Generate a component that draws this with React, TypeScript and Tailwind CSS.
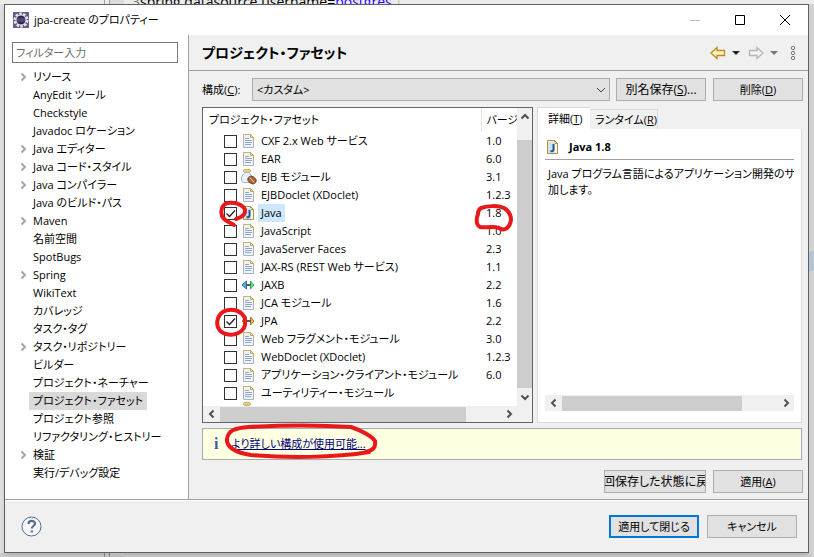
import { ReactNode } from 'react'

const PAGES = [
  { name: 'リソース', open: true },
  { name: 'AnyEdit ツール' },
  { name: 'Checkstyle' },
  { name: 'Javadoc ロケーション' },
  { name: 'Java エディター', open: true },
  { name: 'Java コード・スタイル', open: true },
  { name: 'Java コンパイラー', open: true },
  { name: 'Java のビルド・パス' },
  { name: 'Maven', open: true },
  { name: '名前空間' },
  { name: 'SpotBugs' },
  { name: 'Spring', open: true },
  { name: 'WikiText' },
  { name: 'カバレッジ' },
  { name: 'タスク・タグ' },
  { name: 'タスク・リポジトリー', open: true },
  { name: 'ビルダー' },
  { name: 'プロジェクト・ネーチャー' },
  { name: 'プロジェクト・ファセット', selected: true },
  { name: 'プロジェクト参照' },
  { name: 'リファクタリング・ヒストリー' },
  { name: '検証', open: true },
  { name: '実行/デバッグ設定' },
]

const FACETS = [
  { name: 'CXF 2.x Web サービス', version: '1.0', icon: 'doc' },
  { name: 'EAR', version: '6.0', icon: 'doc' },
  { name: 'EJB モジュール', version: '3.1', icon: 'ejb' },
  { name: 'EJBDoclet (XDoclet)', version: '1.2.3', icon: 'doc' },
  { name: 'Java', version: '1.8', icon: 'java', checked: true, selected: true },
  { name: 'JavaScript', version: '1.0', icon: 'doc' },
  { name: 'JavaServer Faces', version: '2.3', icon: 'doc' },
  { name: 'JAX-RS (REST Web サービス)', version: '1.1', icon: 'doc' },
  { name: 'JAXB', version: '2.2', icon: 'jaxb' },
  { name: 'JCA モジュール', version: '1.6', icon: 'doc' },
  { name: 'JPA', version: '2.2', icon: 'jpa', checked: true },
  { name: 'Web フラグメント・モジュール', version: '3.0', icon: 'doc' },
  { name: 'WebDoclet (XDoclet)', version: '1.2.3', icon: 'doc' },
  { name: 'アプリケーション・クライアント・モジュール', version: '6.0', icon: 'doc' },
  { name: 'ユーティリティー・モジュール', version: '', icon: 'doc' },
]

function FacetIcon({ kind }: { kind: string }) {
  if (kind === 'ejb') {
    return (
      <svg width="16" height="16" viewBox="0 0 16 16">
        <rect x="2.5" y="0.5" width="7" height="2.5" rx="1" fill="#f7d774" stroke="#c09a4c" strokeWidth="0.8" />
        <path
          d="M3.500 3.500h5c0 2 3 2.500 3 5.500v2c0 1.500-1 2.500-2.500 2.500h-6C1.500 13.500.5 12.500.5 11V9c0-3 3-3.500 3-5.500z"
          fill="#eaf3fc"
          stroke="#a3b6d0"
        />
        <ellipse cx="11" cy="11" rx="4.500" ry="3.500" transform="rotate(35 11 11)" fill="#a8683e" stroke="#6b3a1c" strokeWidth="0.8" />
        <path d="M8.500 8.500c2 .5 2 3.500 5 5" fill="none" stroke="#f0cfae" />
      </svg>
    )
  }
  if (kind === 'jaxb' || kind === 'jpa') {
    const left = kind === 'jaxb' ? '#5aaae6' : '#f5c56a'
    const right = kind === 'jaxb' ? '#6fe08a' : '#f5b04a'
    const edge = kind === 'jaxb' ? '#2fae50' : '#b0701c'
    return (
      <svg width="16" height="16" viewBox="0 0 16 16">
        <path d="M5.500 4v8L1 8z" fill={left} stroke={kind === 'jaxb' ? '#2b6fb0' : edge} />
        <path d="M9.500 4v8L13 8z" fill={right} stroke={edge} />
        <path d="M5 8h5" stroke="#5a5a5a" strokeWidth="2" />
      </svg>
    )
  }
  if (kind === 'java') {
    return (
      <svg width="16" height="16" viewBox="0 0 16 16">
        <path d="M2.500 1.500h7l3 3v10h-10z" fill="#fdf8e4" stroke="#b08f45" />
        <path d="M9.500 1.500v3h3z" fill="#e8cf8c" stroke="#b08f45" />
        <rect x="3" y="3" width="7" height="11" fill="#cfe3f6" />
        <path d="M8.500 5v5.500c0 1.500-1 2-3 1.500" fill="none" stroke="#1d5a96" strokeWidth="2" />
      </svg>
    )
  }
  return (
    <svg width="16" height="16" viewBox="0 0 16 16">
      <path d="M2.500 1.500h7l3 3v10h-10z" fill="#eef3fb" stroke="#a9b3c4" />
      <path d="M2.500 6V1.500h7l3 3V8" fill="none" stroke="#c4b27a" />
      <path d="M9.500 1.500v3h3z" fill="#ecd794" stroke="#c4a860" />
      <path d="M4 5.500h4M4 7.500h7M4 9.500h7M4 11.500h6" stroke="#90a5cc" />
    </svg>
  )
}

function Chevron({ dir, className = '' }: { dir: 'left' | 'right' | 'up' | 'down'; className?: string }) {
  const paths = {
    left: 'M6.500 1.500L3 5l3.500 3.500',
    right: 'M3.500 1.500L7 5 3.500 8.500',
    up: 'M1.500 6.500L5 3l3.500 3.500',
    down: 'M1.500 3.500L5 7l3.500-3.500',
  }
  return (
    <svg width="10" height="10" viewBox="0 0 10 10" className={className}>
      <path d={paths[dir]} fill="none" stroke="currentColor" strokeWidth="2" />
    </svg>
  )
}

function PushButton({ children, className = '' }: { children: ReactNode; className?: string }) {
  return (
    <button
      className={`flex h-[23px] shrink-0 items-center justify-center overflow-hidden whitespace-nowrap bg-[#e1e1e1] ${className}`}
    >
      <span>{children}</span>
    </button>
  )
}

function HScroll({ thumb }: { thumb: string }) {
  return (
    <div className="flex h-4 items-center bg-[#f0f0f0] text-[#505050]">
      <div className="flex w-[17px] justify-center">
        <Chevron dir="left" />
      </div>
      <div className="flex h-[15px] flex-1">
        <div className={`bg-[#cdcdcd] ${thumb}`} />
      </div>
      <div className="flex w-[17px] justify-center">
        <Chevron dir="right" />
      </div>
    </div>
  )
}

function TitleBar() {
  return (
    <header className="flex h-[30px] items-center bg-white pl-2">
      <svg width="16" height="16" viewBox="0 0 16 16">
        <rect width="16" height="16" fill="#6b5a8c" />
        <circle cx="8" cy="8" r="6" fill="none" stroke="#e8e4ee" strokeWidth="3" strokeDasharray="2.400 1.300" />
        <circle cx="8" cy="8" r="5" fill="#2f2a4c" stroke="#e8e4ee" />
        <path d="M4 7h8M4 9h8" stroke="#6a6690" />
      </svg>
      <h1 className="ml-[5px] flex-1">jpa-create のプロパティー</h1>
      <button aria-label="最小化" className="flex w-[45px] justify-center">
        <svg width="10" height="10" viewBox="0 0 10 10">
          <path d="M0 5.500h10" stroke="#bdbdbd" />
        </svg>
      </button>
      <button aria-label="最大化" className="flex w-[45px] justify-center">
        <svg width="10" height="10" viewBox="0 0 10 10">
          <path d="M.5.5h9v9h-9z" fill="none" stroke="#000" />
        </svg>
      </button>
      <button aria-label="閉じる" className="flex w-[46px] justify-center">
        <svg width="10" height="10" viewBox="0 0 10 10">
          <path d="M0 0l10 10M10 0L0 10" stroke="#000" />
        </svg>
      </button>
    </header>
  )
}

function Sidebar() {
  return (
    <nav className="w-[184px] shrink-0 border-r border-[#a0a0a0] bg-white pt-[7px] pl-[7px]">
      <input
        aria-label="フィルター入力"
        placeholder="フィルター入力"
        className="block h-[21px] w-[166px] border border-[#7a7a7a] px-[3px] placeholder:text-[#6d6d6d]"
      />
      <ul className="mt-[5px]">
        {PAGES.map((page) => (
          <li key={page.name} className="flex h-[18px] items-center">
            <span className="flex w-[17px] justify-center pl-1 text-[#a6a6a6]">
              {page.open && <Chevron dir="right" />}
            </span>
            <a
              href="#"
              className={`flex h-[18px] items-center whitespace-nowrap px-1 ${page.selected ? 'bg-[#d9d9d9]' : ''}`}
            >
              {page.name}
            </a>
          </li>
        ))}
      </ul>
    </nav>
  )
}

function PageHeader() {
  return (
    <div className="flex h-9 items-center border-b border-[#a0a0a0] pr-3 pl-[13px]">
      <h2 className="flex-1 text-sm font-bold">プロジェクト・ファセット</h2>
      <div className="flex items-center">
        <button aria-label="戻る">
          <svg width="16" height="14" viewBox="0 0 16 14">
            <path d="M1 7l6-5.500v3h7.500v5H7v3z" fill="#fdf3c4" stroke="#c08a1c" strokeWidth="1.300" />
          </svg>
        </button>
        <svg width="8" height="4" viewBox="0 0 8 4" className="ml-[6px]">
          <path d="M0 0h8L4 4z" fill="#222" />
        </svg>
        <button aria-label="進む" className="ml-2">
          <svg width="16" height="14" viewBox="0 0 16 14">
            <path d="M15 7L9 1.500v3H1.500v5H9v3z" fill="#f4f4f4" stroke="#b4b4b4" strokeWidth="1.300" />
          </svg>
        </button>
        <svg width="8" height="4" viewBox="0 0 8 4" className="ml-[6px]">
          <path d="M0 0h8L4 4z" fill="#777" />
        </svg>
        <button aria-label="メニュー" className="ml-3">
          <svg width="6" height="16" viewBox="0 0 6 16" fill="none" stroke="#777">
            <circle cx="3" cy="3" r="1.700" />
            <circle cx="3" cy="8" r="1.700" />
            <circle cx="3" cy="13" r="1.700" />
          </svg>
        </button>
      </div>
    </div>
  )
}

function FacetTable() {
  return (
    <div className="flex w-[331px] shrink-0 border border-[#646464] bg-white">
      <div className="min-w-0 flex-1">
        <div className="h-[298px] overflow-hidden">
          <table className="w-full table-fixed border-collapse text-left">
            <thead>
              <tr className="h-6">
                <th className="border-r border-[#e5e5e5] p-0 pl-[6px] font-normal">プロジェクト・ファセット</th>
                <th className="w-9 overflow-hidden whitespace-nowrap p-0 pl-[5px] font-normal">バージ</th>
              </tr>
            </thead>
            <tbody>
              {FACETS.map((facet) => (
                <tr key={facet.name} className="h-[18px]">
                  <td className="p-0">
                    <label className="flex h-[18px] items-center pl-[21px]">
                      <input
                        type="checkbox"
                        defaultChecked={facet.checked}
                        className="peer size-[13px] shrink-0 appearance-none border border-[#333] bg-white"
                      />
                      <svg
                        width="13"
                        height="13"
                        viewBox="0 0 13 13"
                        className="invisible -ml-[13px] shrink-0 peer-checked:visible"
                      >
                        <path d="M2.500 6.500l3 3 5.500-6" fill="none" stroke="#222" strokeWidth="1.300" />
                      </svg>
                      <span className="ml-1 shrink-0">
                        <FacetIcon kind={facet.icon} />
                      </span>
                      <span
                        className={`ml-px flex h-[18px] items-center whitespace-nowrap px-[3px] ${facet.selected ? 'bg-[#cce8ff]' : ''}`}
                      >
                        {facet.name}
                      </span>
                    </label>
                  </td>
                  <td className="p-0 pl-[5px]">{facet.version}</td>
                </tr>
              ))}
              <tr>
                <td className="p-0 pl-[38px]">
                  <FacetIcon kind="ejb" />
                </td>
                <td />
              </tr>
            </tbody>
          </table>
        </div>
        <HScroll thumb="w-[246px]" />
      </div>
      <div className="flex w-[15px] flex-col items-center bg-[#f0f0f0] pt-1 text-[#505050]">
        <Chevron dir="up" />
        <div className="mt-[18px] mb-1 w-full flex-1 bg-[#cdcdcd]" />
        <Chevron dir="down" className="mb-5" />
      </div>
    </div>
  )
}

function DetailPane() {
  return (
    <section className="flex min-w-0 flex-1 flex-col">
      <div role="tablist" className="flex h-[22px] items-end">
        <button
          role="tab"
          aria-selected="true"
          className="h-[22px] w-[53px] border-t border-l border-[#d9d9d9] bg-white pl-[10px] text-left"
        >
          詳細(<u>T</u>)
        </button>
        <button
          role="tab"
          aria-selected="false"
          className="h-5 w-[68px] border-t border-r border-[#d9d9d9] bg-[#f0f0f0] pl-[5px] text-left"
        >
          ランタイム(<u>R</u>)
        </button>
      </div>
      <div className="flex flex-1 flex-col border border-t-0 border-[#d9d9d9] bg-white px-[7px] pb-[11px]">
        <div className="flex h-[31px] items-center border-b border-[#a0a0a0] pt-[6px]">
          <FacetIcon kind="java" />
          <h3 className="ml-2 font-bold">Java 1.8</h3>
        </div>
        <p className="mt-[6px] flex-1 overflow-hidden whitespace-nowrap pl-[3px] leading-4">
          Java プログラム言語によるアプリケーション開発のサポ
          <br />
          加します。
        </p>
        <HScroll thumb="w-[180px]" />
      </div>
    </section>
  )
}

/** Hand drawn marks laid over the dialog. */
function Marks() {
  return (
    <svg
      width="814"
      height="557"
      viewBox="0 0 814 557"
      className="pointer-events-none absolute top-0 left-0"
      fill="none"
      stroke="#e8191c"
      strokeWidth="4"
      strokeLinecap="round"
    >
      <path d="M236 219c6-2 10-5 9-9-2-6-11-8-18-7-5 2-7 8-5 13 2 5 8 6 12 9" />
      <path d="M241 313c-7-5-18-4-22 3-4 8-1 16 7 18 8 2 17-1 19-9 1-6-1-11-7-14" />
      <path d="M478 214c-2 5-2 11 2 13 6 1 13-1 19 1 6 4 11-1 12-8 0-5-2-9-7-12-7-3-17-2-23 0-3 2-3 4-3 6" />
      <path d="M369 452c-35 6-83 6-118 3-15-2-25-8-24-16 1-9 9-11 22-12 35-2 72-2 102 0 9 3 21 9 24 14 1 7-2 9-9 11" />
    </svg>
  )
}

export default function App() {
  return (
    <div className="relative min-h-screen overflow-hidden bg-[#cdcdcd] font-['Open_Sans','Noto_Sans_CJK_JP',sans-serif] text-[11px] leading-[18px] text-black [font-feature-settings:'palt']">
      <div className="flex h-1 overflow-hidden bg-[#ececec] text-sm leading-[4px]">
        <div className="w-[104px]" />
        <div className="w-[6px] border-x border-[#a0a0a0]" />
        <div className="w-[14px] bg-[#dcdcdc]" />
        <div className="flex flex-1 pl-[8px]">
          <span className="text-[#787878]">3</span>
          <span>spring.datasource.username=</span>
          <span className="text-[#2a00ff]">postgres</span>
          <span className="text-[#c0c0c0]">↓</span>
        </div>
      </div>
      <div className="flex">
        <div className="w-1 bg-[#e0e0e0]" />
        <main className="flex min-w-0 flex-1 flex-col border border-[#606060] bg-[#f0f0f0] shadow-md">
          <TitleBar />
          <div className="flex border-b border-[#a0a0a0]">
            <Sidebar />
            <div className="flex min-w-0 flex-1 flex-col">
              <PageHeader />
              <div className="flex flex-col pt-[7px] pr-[5px] pl-[13px]">
                <div className="flex items-center">
                  <label htmlFor="preset" className="w-[50px]">
                    構成(<u>C</u>):
                  </label>
                  <div className="relative flex flex-1">
                    <select id="preset" className="h-[23px] w-full appearance-none border border-[#adadad] bg-[#e1e1e1] px-1">
                      <option>&lt;カスタム&gt;</option>
                    </select>
                    <svg
                      width="10"
                      height="10"
                      viewBox="0 0 10 10"
                      className="pointer-events-none absolute top-[7px] right-1"
                    >
                      <path d="M1 3l4 4 4-4" fill="none" stroke="#444" />
                    </svg>
                  </div>
                  <PushButton className="ml-[6px] w-[90px] border border-[#adadad] text-xs">
                    別名保存(<u>S</u>)...
                  </PushButton>
                  <PushButton className="ml-[7px] w-[90px] border border-[#adadad]">
                    削除(<u>D</u>)
                  </PushButton>
                </div>
                <div className="mt-[6px] mr-px flex gap-1">
                  <FacetTable />
                  <DetailPane />
                </div>
                <div className="mt-[5px] mr-px flex h-8 items-center border border-[#a9a9b4] bg-[#ffffe1] pl-[11px]">
                  <span className="w-[17px] font-['Liberation_Serif',serif] text-base font-bold text-[#3a5fa8]">i</span>
                  <a href="#" className="text-[#000080] underline">
                    より詳しい構成が使用可能...
                  </a>
                </div>
                <div className="mt-[10px] mb-[6px] flex justify-end gap-[7px]">
                  <PushButton className="w-[102px] border border-[#adadad] text-xs">前回保存した状態に戻す</PushButton>
                  <PushButton className="w-[90px] border border-[#adadad]">
                    適用(<u>A</u>)
                  </PushButton>
                </div>
              </div>
            </div>
          </div>
          <footer className="flex h-[52px] items-center border-t border-white pr-[11px] pl-4">
            <button aria-label="ヘルプ">
              <svg width="21" height="21" viewBox="0 0 21 21" fill="none" stroke="#566a8c">
                <circle cx="10.500" cy="10.500" r="9.500" fill="#f6f8fb" />
                <path d="M7.500 8c0-4 6.500-4 6.500-.5 0 2.500-3.200 2.500-3.200 5" strokeWidth="2.200" />
                <path d="M10.800 14.500v2" strokeWidth="2.200" />
              </svg>
            </button>
            <div className="flex flex-1 justify-end gap-2">
              <PushButton className="w-[90px] border-2 border-[#0078d7]">適用して閉じる</PushButton>
              <PushButton className="w-[90px] border border-[#adadad]">キャンセル</PushButton>
            </div>
          </footer>
        </main>
        <div className="w-[5px] bg-[#d2d2d2] pt-[247px]">
          <div className="h-5 bg-[#b4c4d4]" />
        </div>
      </div>
      <div className="flex h-1 bg-[#cdcdcd]">
        <div className="w-[104px]" />
        <div className="w-[6px] border-x border-[#808080]" />
        <div className="w-[14px] bg-[#bcbcbc]" />
      </div>
      <Marks />
    </div>
  )
}
